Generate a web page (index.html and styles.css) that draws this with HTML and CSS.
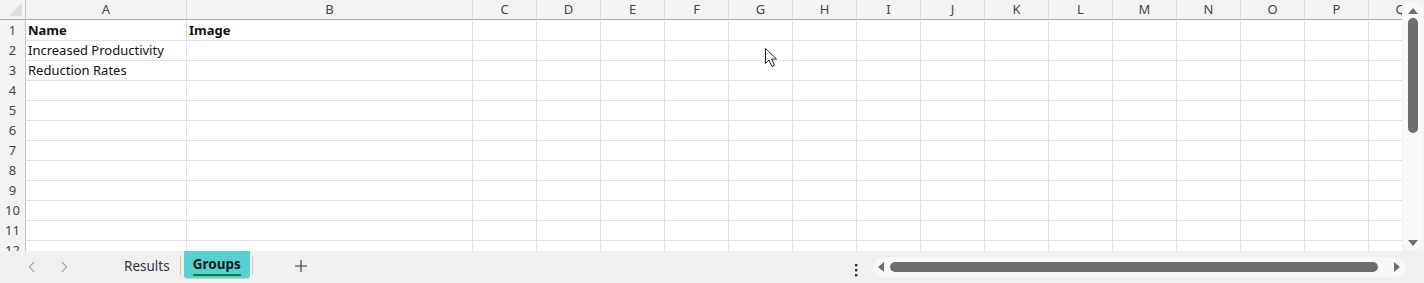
FILE: index.html
```html
<!DOCTYPE html>
<html>
<head>
  <meta charset="utf-8">
  <link rel="stylesheet" href="styles.css">
</head>
<body>
  <div class="window">
    <div class="main">
      <div class="sheet">
        <div class="row head">
          <div class="corner"><span class="corner-tri"></span></div>
          <div class="col">A</div><div class="col">B</div><div class="col">C</div><div class="col">D</div>
          <div class="col">E</div><div class="col">F</div><div class="col">G</div><div class="col">H</div>
          <div class="col">I</div><div class="col">J</div><div class="col">K</div><div class="col">L</div>
          <div class="col">M</div><div class="col">N</div><div class="col">O</div><div class="col">P</div>
          <div class="col">Q</div>
        </div>
        <div class="row">
          <div class="rh">1</div><div class="c bold">Name</div><div class="c bold">Image</div>
          <div class="c"></div><div class="c"></div><div class="c"></div><div class="c"></div><div class="c"></div>
          <div class="c"></div><div class="c"></div><div class="c"></div><div class="c"></div><div class="c"></div>
          <div class="c"></div><div class="c"></div><div class="c"></div><div class="c"></div><div class="c"></div>
        </div>
        <div class="row">
          <div class="rh">2</div><div class="c">Increased Productivity</div><div class="c"></div>
          <div class="c"></div><div class="c"></div><div class="c"></div><div class="c"></div><div class="c"></div>
          <div class="c"></div><div class="c"></div><div class="c"></div><div class="c"></div><div class="c"></div>
          <div class="c"></div><div class="c"></div><div class="c"></div><div class="c"></div><div class="c"></div>
        </div>
        <div class="row">
          <div class="rh">3</div><div class="c">Reduction Rates</div><div class="c"></div>
          <div class="c"></div><div class="c"></div><div class="c"></div><div class="c"></div><div class="c"></div>
          <div class="c"></div><div class="c"></div><div class="c"></div><div class="c"></div><div class="c"></div>
          <div class="c"></div><div class="c"></div><div class="c"></div><div class="c"></div><div class="c"></div>
        </div>
        <div class="row">
          <div class="rh">4</div><div class="c"></div><div class="c"></div>
          <div class="c"></div><div class="c"></div><div class="c"></div><div class="c"></div><div class="c"></div>
          <div class="c"></div><div class="c"></div><div class="c"></div><div class="c"></div><div class="c"></div>
          <div class="c"></div><div class="c"></div><div class="c"></div><div class="c"></div><div class="c"></div>
        </div>
        <div class="row">
          <div class="rh">5</div><div class="c"></div><div class="c"></div>
          <div class="c"></div><div class="c"></div><div class="c"></div><div class="c"></div><div class="c"></div>
          <div class="c"></div><div class="c"></div><div class="c"></div><div class="c"></div><div class="c"></div>
          <div class="c"></div><div class="c"></div><div class="c"></div><div class="c"></div><div class="c"></div>
        </div>
        <div class="row">
          <div class="rh">6</div><div class="c"></div><div class="c"></div>
          <div class="c"></div><div class="c"></div><div class="c"></div><div class="c"></div><div class="c"></div>
          <div class="c"></div><div class="c"></div><div class="c"></div><div class="c"></div><div class="c"></div>
          <div class="c"></div><div class="c"></div><div class="c"></div><div class="c"></div><div class="c"></div>
        </div>
        <div class="row">
          <div class="rh">7</div><div class="c"></div><div class="c"></div>
          <div class="c"></div><div class="c"></div><div class="c"></div><div class="c"></div><div class="c"></div>
          <div class="c"></div><div class="c"></div><div class="c"></div><div class="c"></div><div class="c"></div>
          <div class="c"></div><div class="c"></div><div class="c"></div><div class="c"></div><div class="c"></div>
        </div>
        <div class="row">
          <div class="rh">8</div><div class="c"></div><div class="c"></div>
          <div class="c"></div><div class="c"></div><div class="c"></div><div class="c"></div><div class="c"></div>
          <div class="c"></div><div class="c"></div><div class="c"></div><div class="c"></div><div class="c"></div>
          <div class="c"></div><div class="c"></div><div class="c"></div><div class="c"></div><div class="c"></div>
        </div>
        <div class="row">
          <div class="rh">9</div><div class="c"></div><div class="c"></div>
          <div class="c"></div><div class="c"></div><div class="c"></div><div class="c"></div><div class="c"></div>
          <div class="c"></div><div class="c"></div><div class="c"></div><div class="c"></div><div class="c"></div>
          <div class="c"></div><div class="c"></div><div class="c"></div><div class="c"></div><div class="c"></div>
        </div>
        <div class="row">
          <div class="rh">10</div><div class="c"></div><div class="c"></div>
          <div class="c"></div><div class="c"></div><div class="c"></div><div class="c"></div><div class="c"></div>
          <div class="c"></div><div class="c"></div><div class="c"></div><div class="c"></div><div class="c"></div>
          <div class="c"></div><div class="c"></div><div class="c"></div><div class="c"></div><div class="c"></div>
        </div>
        <div class="row">
          <div class="rh">11</div><div class="c"></div><div class="c"></div>
          <div class="c"></div><div class="c"></div><div class="c"></div><div class="c"></div><div class="c"></div>
          <div class="c"></div><div class="c"></div><div class="c"></div><div class="c"></div><div class="c"></div>
          <div class="c"></div><div class="c"></div><div class="c"></div><div class="c"></div><div class="c"></div>
        </div>
        <div class="row">
          <div class="rh">12</div><div class="c"></div><div class="c"></div>
          <div class="c"></div><div class="c"></div><div class="c"></div><div class="c"></div><div class="c"></div>
          <div class="c"></div><div class="c"></div><div class="c"></div><div class="c"></div><div class="c"></div>
          <div class="c"></div><div class="c"></div><div class="c"></div><div class="c"></div><div class="c"></div>
        </div>

        <svg class="pointer" width="16" height="22" viewBox="0 0 16 22">
          <path d="M1.5 1.5 L1.5 16.5 L5 13 L8 19.5 L10.5 18.3 L7.6 12 L12.5 12 Z" fill="#fff" stroke="#222" stroke-width="1" stroke-linejoin="round"/>
        </svg>
      </div>

      <div class="vscroll">
        <div class="vtrack">
          <span class="tri tri-up"></span>
          <div class="vthumb"></div>
          <div class="vspace"></div>
          <span class="tri tri-down"></span>
        </div>
      </div>
    </div>

    <div class="tabbar">
      <div class="nav">
        <svg width="8" height="12" viewBox="0 0 8 12"><path d="M6 1 L1.5 6 L6 11" fill="none" stroke="#9a9a9a" stroke-width="1.1"/></svg>
        <svg width="8" height="12" viewBox="0 0 8 12"><path d="M2 1 L6.5 6 L2 11" fill="none" stroke="#9a9a9a" stroke-width="1.1"/></svg>
      </div>
      <div class="tab">Results</div>
      <span class="sep"></span>
      <div class="tab active"><span>Groups</span></div>
      <span class="sep"></span>
      <div class="add">
        <svg width="12" height="12" viewBox="0 0 12 12"><path d="M6 0 V12 M0 6 H12" stroke="#333" stroke-width="1.1"/></svg>
      </div>
      <div class="spacer"></div>
      <div class="more">
        <svg width="4" height="14" viewBox="0 0 4 14"><rect x="1" y="1" width="2.4" height="2.4" fill="#333"/><rect x="1" y="6" width="2.4" height="2.4" fill="#333"/><rect x="1" y="11" width="2.4" height="2.4" fill="#333"/></svg>
      </div>
      <div class="htrack">
        <span class="tri tri-left"></span>
        <div class="hthumb"></div>
        <span class="tri tri-right"></span>
      </div>
    </div>
  </div>
</body>
</html>
```

FILE: styles.css
```css
* {
  box-sizing: border-box;
}
body {
  margin: 0;
  width: 1424px;
  height: 283px;
  overflow: hidden;
  background: #fff;
  font-family: "Noto Sans", "Open Sans", sans-serif;
  color: #111;
}
.window {
  display: flex;
  flex-direction: column;
  height: 283px;
}
.main {
  display: flex;
  height: 251px;
}

/* grid */
.sheet {
  position: relative;
  width: 1402px;
  height: 251px;
  overflow: hidden;
}
.row {
  display: grid;
  grid-template-columns: 26px 161px 286px repeat(15, 64px);
  height: 20px;
}
.row > div {
  border-right: 1px solid #e1e1e1;
  border-bottom: 1px solid #e1e1e1;
  white-space: nowrap;
  overflow: visible;
}
.head > div {
  background: #f3f3f3;
  border-bottom: 1px solid #acacac;
  border-right: 1px solid #dcdcdc;
  color: #444;
  font-size: 13px;
  line-height: 19px;
  text-align: center;
}
.head .corner {
  position: relative;
  border-right: 1px solid #c6c6c6;
}
.corner-tri {
  position: absolute;
  right: 3px;
  bottom: 3px;
  width: 0;
  height: 0;
  border-left: 13px solid transparent;
  border-bottom: 13px solid #dcdcdc;
}
.row > .rh {
  background: #f3f3f3;
  border-right: 1px solid #c6c6c6;
  border-bottom: 1px solid #e1e1e1;
  color: #444;
  font-size: 13px;
  line-height: 20px;
  text-align: center;
}
.c {
  font-size: 13px;
  line-height: 20px;
  padding-left: 2px;
}
.bold {
  font-weight: bold;
}
.pointer {
  position: absolute;
  left: 764px;
  top: 47px;
}

/* vertical scroll */
.vscroll {
  width: 22px;
  background: #f3f3f3;
  padding: 1px 1px 0 1px;
}
.vtrack {
  height: 250px;
  background: #f9f9f9;
  border-radius: 10px;
  display: flex;
  flex-direction: column;
  align-items: center;
  padding-top: 7px;
}
.vthumb {
  width: 10px;
  height: 115px;
  margin-top: 4px;
  background: #6e6e6e;
  border-radius: 5px;
}
.vspace {
  flex: 1;
}
.tri {
  width: 0;
  height: 0;
  display: block;
}
.tri-up {
  border-left: 5px solid transparent;
  border-right: 5px solid transparent;
  border-bottom: 6px solid #6e6e6e;
}
.tri-down {
  border-left: 5px solid transparent;
  border-right: 5px solid transparent;
  border-top: 6px solid #6e6e6e;
  margin-bottom: 5px;
}
.tri-left {
  border-top: 5px solid transparent;
  border-bottom: 5px solid transparent;
  border-right: 6px solid #6e6e6e;
}
.tri-right {
  border-top: 5px solid transparent;
  border-bottom: 5px solid transparent;
  border-left: 6px solid #6e6e6e;
}

/* tab bar */
.tabbar {
  height: 32px;
  background: #f0f0f0;
  display: flex;
  align-items: flex-start;
}
.nav {
  display: flex;
  gap: 24px;
  padding: 10px 0 0 28px;
  width: 114px;
}
.tab {
  font-size: 13.5px;
  color: #333;
  padding: 6px 10px 0 10px;
  height: 27px;
}
.tab.active {
  background: #56d0d0;
  color: #1a1a1a;
  font-weight: bold;
  border-radius: 0 0 3px 3px;
  box-shadow: 0 1px 1px rgba(0, 0, 0, 0.15);
  padding: 4px 9px 0 9px;
  margin: 0 2px 0 3px;
}
.tab.active span {
  display: inline-block;
  border-bottom: 2.5px solid #107c41;
  line-height: 17px;
  padding-bottom: 1px;
}
.sep {
  width: 1px;
  height: 19px;
  margin-top: 5px;
  background: #c8c8c8;
}
.add {
  padding: 9px 0 0 42px;
}
.add svg {
  display: block;
}
.spacer {
  flex: 1;
}
.more {
  padding: 9px 15px 0 0;
}
.htrack {
  width: 533px;
  height: 20px;
  margin: 6px 18px 0 0;
  background: #f8f8f8;
  border-radius: 10px;
  display: flex;
  align-items: center;
  padding: 0 6px 0 5px;
}
.hthumb {
  flex: 1;
  height: 10px;
  margin: 0 16px 0 6px;
  background: #6e6e6e;
  border-radius: 5px;
}
```
